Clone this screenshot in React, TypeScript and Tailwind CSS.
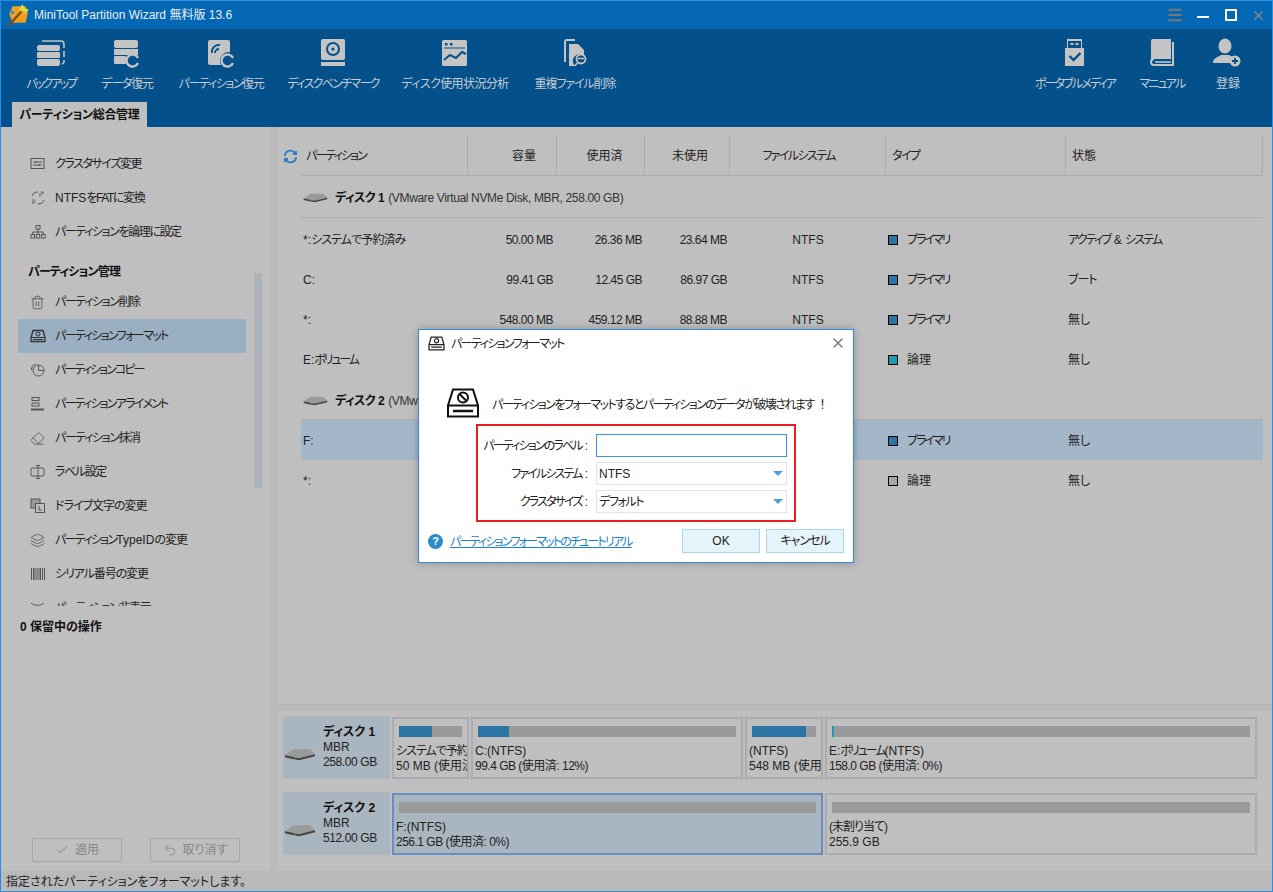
import { Check, Eraser, Layers, Menu, Trash2, Undo2, X } from "lucide-react";
import type { ReactNode } from "react";

/* toolbar icons */
const IconBackup = () => (
  <svg width="30" height="30" viewBox="0 0 30 30">
    <rect x="1" y="7" width="23" height="6" rx="2" fill="#c4c4c4" />
    <rect x="1" y="14" width="23" height="6" rx="1" fill="#c4c4c4" />
    <rect x="1" y="21" width="23" height="7" rx="2" fill="#c4c4c4" />
    <path d="M6 3h19a3 3 0 0 1 3 3v4M28 13v6M28 22v2a3 3 0 0 1-2 2" stroke="#c4c4c4" strokeWidth="1.6" fill="none" />
  </svg>
);
const IconData = () => (
  <svg width="30" height="30" viewBox="0 0 30 30">
    <rect x="2" y="2" width="24" height="8" rx="2" fill="#c4c4c4" />
    <rect x="2" y="11" width="24" height="6" fill="#c4c4c4" />
    <rect x="2" y="18" width="12" height="8" rx="1" fill="#c4c4c4" />
    <path d="M26 20a6 6 0 1 0 0 5" stroke="#c4c4c4" strokeWidth="2.4" fill="none" />
  </svg>
);
const IconPart = () => (
  <svg width="30" height="30" viewBox="0 0 30 30">
    <path d="M4 2h18a2 2 0 0 1 2 2v10a9 9 0 0 0-9 13H4a2 2 0 0 1-2-2V4a2 2 0 0 1 2-2z" fill="#c4c4c4" />
    <path d="M6 15a7 7 0 0 1 8-8M9 15a4 4 0 0 1 4-4" stroke="#03508a" strokeWidth="1.8" fill="none" />
    <path d="M27 20a6 6 0 1 0 0 5" stroke="#c4c4c4" strokeWidth="2.4" fill="none" />
  </svg>
);
const IconBench = () => (
  <svg width="30" height="30" viewBox="0 0 30 30">
    <rect x="3" y="1" width="24" height="21" rx="2" fill="#c4c4c4" />
    <circle cx="15" cy="11" r="7" fill="#03508a" />
    <circle cx="15" cy="11" r="5" fill="#c4c4c4" />
    <circle cx="15" cy="11" r="1.6" fill="#03508a" />
    <rect x="3" y="24" width="24" height="4" fill="#c4c4c4" />
  </svg>
);
const IconUsage = () => (
  <svg width="30" height="30" viewBox="0 0 30 30">
    <rect x="2" y="2" width="25" height="26" rx="1.5" fill="#c4c4c4" />
    <rect x="5" y="5" width="2.5" height="2.5" fill="#03508a" />
    <rect x="10" y="5" width="2.5" height="2.5" fill="#03508a" />
    <path d="M4 10h21" stroke="#03508a" strokeWidth="1" />
    <path d="M4 22l6-5 6 3 6-6 4 2" stroke="#03508a" strokeWidth="2" fill="none" />
  </svg>
);
const IconDup = () => (
  <svg width="30" height="30" viewBox="0 0 30 30">
    <path d="M5 24V4a2 2 0 0 1 2-2h8" stroke="#c4c4c4" strokeWidth="2" fill="none" />
    <path d="M9 6h9l6 6v6a6 6 0 0 0-9 10H9z" fill="#c4c4c4" />
    <circle cx="21" cy="21" r="4.5" stroke="#c4c4c4" strokeWidth="1.8" fill="none" />
    <path d="M18 20.5h6M17.5 25l-3 3" stroke="#c4c4c4" strokeWidth="1.6" />
  </svg>
);
const IconUsb = () => (
  <svg width="30" height="30" viewBox="0 0 30 30">
    <path d="M7 1h15v9h2v18H5V10h2z" fill="#c4c4c4" />
    <rect x="8" y="3" width="13" height="7" fill="#03508a" />
    <rect x="10.5" y="5" width="3" height="2" fill="#c4c4c4" />
    <rect x="15.5" y="5" width="3" height="2" fill="#c4c4c4" />
    <path d="M9.5 18l4 4 7-7" stroke="#03508a" strokeWidth="2.4" fill="none" />
  </svg>
);
const IconBook = () => (
  <svg width="30" height="30" viewBox="0 0 30 30">
    <path d="M6 1h18v20H7a3 3 0 0 0-3 2V3a2 2 0 0 1 2-2z" fill="#c4c4c4" />
    <path d="M26 4v23H7a3 3 0 0 1 0-6" stroke="#c4c4c4" strokeWidth="2" fill="none" />
    <path d="M8 24h16" stroke="#c4c4c4" strokeWidth="1.6" />
  </svg>
);
const IconUser = () => (
  <svg width="30" height="30" viewBox="0 0 30 30">
    <ellipse cx="12" cy="8" rx="6.5" ry="7.5" fill="#c4c4c4" />
    <path d="M0 25c0-5 5-6 8-8h8c2 1 3 1.500 4 2a7 7 0 0 0-3 6z" fill="#c4c4c4" />
    <circle cx="22" cy="23" r="5.500" fill="#c4c4c4" />
    <path d="M19 23h6M22 20v6" stroke="#03508a" strokeWidth="1.800" />
  </svg>
);

const tools = [
  { label: "バックアップ", icon: <IconBackup />, w: "w-[76px]", t: "tracking-[-2.3px]" },
  { label: "データ復元", icon: <IconData />, w: "w-[76px]", t: "tracking-[-1.2px]" },
  { label: "パーティション復元", icon: <IconPart />, w: "w-[112px]", t: "tracking-[-1.4px]" },
  { label: "ディスクベンチマーク", icon: <IconBench />, w: "w-[112px]", t: "tracking-[-1.7px]" },
  { label: "ディスク使用状況分析", icon: <IconUsage />, w: "w-[132px]", t: "tracking-[-0.6px]" },
  { label: "重複ファイル削除", icon: <IconDup />, w: "w-[108px]", t: "tracking-[-1.1px]" },
];

const rightTools = [
  { label: "ポータブルメディア", icon: <IconUsb />, w: "w-[96px]", t: "tracking-[-1.9px]" },
  { label: "マニュアル", icon: <IconBook />, w: "w-[78px]", t: "tracking-[-1.8px]" },
  { label: "登録", icon: <IconUser />, w: "w-[54px]", t: "" },
];

function ToolItem({ label, icon, w, t }: { label: string; icon: ReactNode; w: string; t: string }) {
  return (
    <div className={`${w} flex shrink-0 flex-col items-center`}>
      <div className="flex h-[32px] items-center">{icon}</div>
      <div className={`mt-[7px] text-[12px] leading-[16px] whitespace-nowrap text-[#c6cdd4] ${t}`}>{label}</div>
    </div>
  );
}

/* sidebar icons */
const stroke = "#555";
const SideSvg = ({ children }: { children: ReactNode }) => (
  <svg width="16" height="16" viewBox="0 0 16 16" fill="none" stroke={stroke} strokeWidth="1">
    {children}
  </svg>
);
const sideIcons: Record<string, ReactNode> = {
  cluster: (
    <SideSvg>
      <rect x="1" y="2.500" width="13" height="10" />
      <path d="M3 6h9M3 9h9M6 5v2M9 8v2" />
    </SideSvg>
  ),
  convert: (
    <SideSvg>
      <path d="M2 6a6 6 0 0 1 6-4M14 10a6 6 0 0 1-6 4M11 2h2v2M3 14v-2" />
      <text x="9" y="7" fontSize="5" fill={stroke} stroke="none">F</text>
      <text x="2" y="13" fontSize="5" fill={stroke} stroke="none">N</text>
    </SideSvg>
  ),
  network: (
    <SideSvg>
      <rect x="6" y="1.500" width="4" height="3.500" />
      <rect x="1" y="10.500" width="3.500" height="3.500" />
      <rect x="6.200" y="10.500" width="3.500" height="3.500" />
      <rect x="11.500" y="10.500" width="3.500" height="3.500" />
      <path d="M8 5v5.500M2.700 10.500V8h10.600v2.500" />
    </SideSvg>
  ),
  trash: <Trash2 size={15} color={stroke} strokeWidth={1.4} />,
  format: (
    <SideSvg>
      <path d="M3 2.500h10l2 7v4H1v-4z" strokeWidth="1.300" stroke="#333" />
      <path d="M1 9.500h14M3 11.500h10" stroke="#333" />
      <circle cx="8" cy="6" r="2" stroke="#333" />
    </SideSvg>
  ),
  copy: (
    <SideSvg>
      <circle cx="8.500" cy="8.500" r="5.500" />
      <path d="M8.500 3v5.500H14M1.500 8a6 6 0 0 1 4-6" />
    </SideSvg>
  ),
  align: (
    <SideSvg>
      <rect x="2" y="1.500" width="7" height="3" />
      <rect x="2" y="7" width="7" height="3" />
      <path d="M1 13.500h13" strokeWidth="2" />
    </SideSvg>
  ),
  eraser: <Eraser size={15} color={stroke} strokeWidth={1.3} />,
  label: (
    <SideSvg>
      <rect x="1" y="4" width="13" height="8" rx="1" />
      <path d="M6 1.500h4M8 1.500v13M6 14.500h4" />
    </SideSvg>
  ),
  letter: (
    <SideSvg>
      <rect x="1" y="1" width="9" height="9" fill="#999" />
      <rect x="5.500" y="5.500" width="9" height="9" fill="#bfbfbf" />
      <path d="M9 8v4h3" />
    </SideSvg>
  ),
  layers: <Layers size={15} color={stroke} strokeWidth={1.3} />,
  serial: (
    <SideSvg>
      <path d="M1.500 2v12M3.500 2v12M5 2v12M7 2v12M9 2v12M10.500 2v12M12.500 2v12M14.500 2v12" />
    </SideSvg>
  ),
  hide: (
    <SideSvg>
      <path d="M1 3c3 3 10 3 13 0" />
    </SideSvg>
  ),
};

const topItems = [
  { label: "クラスタサイズ変更", icon: "cluster", t: "tracking-[-1.4px]" },
  { label: <>NTFS<span className="tracking-[-1.4px]">をFATに変換</span></>, icon: "convert", t: "" },
  { label: "パーティションを論理に設定", icon: "network", t: "tracking-[-1.4px]" },
];
const manageItems = [
  { label: "パーティション削除", icon: "trash", t: "tracking-[-1.4px]" },
  { label: "パーティションフォーマット", icon: "format", active: true, t: "tracking-[-1.6px]" },
  { label: "パーティションコピー", icon: "copy", t: "tracking-[-1.9px]" },
  { label: "パーティションアライメント", icon: "align", t: "tracking-[-1.8px]" },
  { label: "パーティション抹消", icon: "eraser", t: "tracking-[-1.4px]" },
  { label: "ラベル設定", icon: "label", t: "tracking-[-1.4px]" },
  { label: "ドライブ文字の変更", icon: "letter", t: "tracking-[-1px]" },
  { label: <><span className="tracking-[-1.7px]">パーティション</span>TypeID<span className="tracking-[-1px]">の変更</span></>, icon: "layers", t: "" },
  { label: "シリアル番号の変更", icon: "serial", t: "tracking-[-1.1px]" },
  { label: "パーティション非表示", icon: "hide", t: "tracking-[-1.4px]" },
];

function SideItem({ label, icon, active, t }: { label: ReactNode; icon: string; active?: boolean; t: string }) {
  return (
    <div className={`flex h-[34px] items-center pl-[12px] text-[12px] whitespace-nowrap text-[#222] ${active ? "bg-[#9aafc2]" : ""}`}>
      <span className="flex w-[25px] shrink-0 items-center">{sideIcons[icon]}</span>
      <span className={t}>{label}</span>
    </div>
  );
}

/* disk image used by the table and the map */
const DiskImg = ({ w }: { w: number }) => (
  <svg width={w} height={w * 0.45} viewBox="0 0 32 14">
    <path d="M1 8L9 2h17l5 5-3 2-12 3H6L1 10z" fill="#9a9a9a" />
    <path d="M1 8l14 3 16-4v2L15 13 1 10z" fill="#444" />
    <circle cx="11" cy="10.500" r="0.800" fill="#3fbf5f" />
  </svg>
);

const swatch: Record<string, string> = { blue: "bg-[#2c74a3]", teal: "bg-[#1f9cb0]", gray: "bg-[#a9a9a9]" };

type Row = {
  name: ReactNode;
  cap?: string;
  used?: string;
  free?: string;
  fs?: string;
  color: string;
  type: string;
  typeT?: string;
  status: ReactNode;
  statusT?: string;
  selected?: boolean;
};

const disk1: Row[] = [
  {
    name: <>*:<span className="tracking-[-0.9px]">システムで予約済み</span></>,
    cap: "50.00 MB",
    used: "26.36 MB",
    free: "23.64 MB",
    fs: "NTFS",
    color: "blue",
    type: "プライマリ",
    typeT: "tracking-[-2px]",
    status: <><span className="tracking-[-1.8px]">アクティブ</span> &amp; <span className="tracking-[-1.8px]">システム</span></>,
  },
  { name: "C:", cap: "99.41 GB", used: "12.45 GB", free: "86.97 GB", fs: "NTFS", color: "blue", type: "プライマリ", typeT: "tracking-[-2px]", status: "ブート", statusT: "tracking-[-1px]" },
  { name: "*:", cap: "548.00 MB", used: "459.12 MB", free: "88.88 MB", fs: "NTFS", color: "blue", type: "プライマリ", typeT: "tracking-[-2px]", status: "無し" },
  { name: <>E:<span className="tracking-[-2.2px]">ボリューム</span></>, fs: "NTFS", color: "teal", type: "論理", status: "無し" },
];
const disk2: Row[] = [
  { name: "F:", fs: "NTFS", color: "blue", type: "プライマリ", typeT: "tracking-[-2px]", status: "無し", selected: true },
  { name: "*:", fs: "NTFS", color: "gray", type: "論理", status: "無し" },
];

function TableRow({ r }: { r: Row }) {
  return (
    <div className={`grid h-[40px] grid-cols-[167px_89px_88px_85px_156px_180px_197px] items-center pt-[2px] text-[12px] text-[#222] ${r.selected ? "bg-[#a4b7c9]" : ""}`}>
      <div className="pl-[2px]">{r.name}</div>
      <div className="pr-[4px] text-right tracking-[-0.5px]">{r.cap}</div>
      <div className="pr-[3px] text-right tracking-[-0.5px]">{r.used}</div>
      <div className="pr-[3px] text-right tracking-[-0.5px]">{r.free}</div>
      <div className="text-center">{r.fs}</div>
      <div className="flex items-center pl-[2px]">
        <span className={`mr-[9px] size-[10px] border border-black ${swatch[r.color]}`} />
        <span className={r.typeT}>{r.type}</span>
      </div>
      <div className={`pl-[2px] ${r.statusT ?? ""}`}>{r.status}</div>
    </div>
  );
}

function DiskHead({ n, rest, h }: { n: string; rest: string; h: string }) {
  return (
    <div className={`${h} flex items-center border-b border-[#adadad] pt-[3px] pl-[2px] text-[12px] text-[#333]`}>
      <DiskImg w={25} />
      <b className="ml-[7px] font-bold tracking-[-0.5px] text-[#111]">ディスク {n}</b>
      <span className="ml-[4px] tracking-[-0.35px] whitespace-nowrap">{rest}</span>
    </div>
  );
}

type Part = { w: string; line1: ReactNode; line2: string; t1?: string; t2?: string; used?: string; bar?: string; selected?: boolean };

function PartBox({ p }: { p: Part }) {
  return (
    <div className={`${p.w} h-[62px] shrink-0 overflow-hidden border-2 px-[5px] pt-[7px] ${p.selected ? "border-[#6a8ac8] bg-[#a9b5bf]" : "border-[#a9adb0]"}`}>
      <div className="h-[11px] bg-[#9a9a9a]">
        {p.used && <div className={`h-full ${p.used} ${p.bar ?? "bg-[#2c74a3]"}`} />}
      </div>
      <div className="mt-[7px] -ml-[3px] text-[12px] leading-[15px] whitespace-nowrap text-[#222]">
        <div className={p.t1}>{p.line1}</div>
        <div className={p.t2}>{p.line2}</div>
      </div>
    </div>
  );
}

function DiskInfo({ n, size }: { n: string; size: string }) {
  return (
    <div className="flex h-[63px] w-[107px] shrink-0 items-center rounded-l-[3px] bg-[#a9b5bf]">
      <div className="mt-[14px] ml-[1px]">
        <DiskImg w={32} />
      </div>
      <div className="ml-[7px] text-[12px] leading-[15px] text-[#222]">
        <div className="font-bold text-[#111]">ディスク {n}</div>
        <div>MBR</div>
        <div className="tracking-[-0.4px]">{size}</div>
      </div>
    </div>
  );
}

function FormRow({ label, children }: { label: string; children: ReactNode }) {
  return (
    <div className="mb-[5px] flex h-[23px] items-center">
      <div className="w-[110px] text-right whitespace-nowrap">
        <span className="tracking-[-1.85px]">{label}</span>
        <span className="ml-[3px]">:</span>
      </div>
      <div className="ml-[8px]">{children}</div>
    </div>
  );
}

function SelectBox({ value }: { value: string }) {
  return (
    <div className="flex h-[23px] w-[191px] items-center justify-between border border-[#e3e3e3] pr-[3px] pl-[2px]">
      <span className={value === "NTFS" ? "" : "tracking-[-1.4px]"}>{value}</span>
      <span className="h-0 w-0 border-x-[5px] border-t-[5px] border-x-transparent border-t-[#4a9fdc]" />
    </div>
  );
}

function Dialog() {
  return (
    <div className="absolute top-[329px] left-[417px] flex h-[234px] w-[436px] flex-col border border-[#2a8fe0] bg-white text-[12px] text-[#222] shadow-[0_0_8px_rgba(0,0,0,0.25)]">
      <div className="flex h-[26px] items-center pr-[7px] pl-[9px]">
        <svg width="17" height="15" viewBox="0 0 16 14" fill="none" stroke="#222" strokeWidth="1.200">
          <path d="M3 1h10l2 7v5H1V8z" />
          <path d="M1 8h14M3 10.500h10" />
          <circle cx="8" cy="4.500" r="2" />
        </svg>
        <span className="ml-[6px] flex-1 pt-[2px] tracking-[-1.6px]">パーティションフォーマット</span>
        <X size={16} color="#777" strokeWidth={2} />
      </div>
      <div className="mt-[32px] flex items-center pl-[28px]">
        <svg width="32" height="30" viewBox="0 0 32 30" fill="none" stroke="#111" strokeWidth="2">
          <path d="M6 1.500h20l5 16v11H1v-11z" />
          <path d="M1 17.500h30" />
          <path d="M6 23h20" strokeWidth="2.500" />
          <circle cx="16" cy="9.500" r="5" />
          <path d="M12.500 6l7 7" />
        </svg>
        <span className="ml-[13px] pt-[3px] whitespace-nowrap">
          <span className="tracking-[-1.55px]">パーティションをフォーマットするとパーティションのデータが破壊されます</span>
          <span className="ml-[6px]">！</span>
        </span>
      </div>
      <div className="mt-[6px] ml-[57px] h-[98px] w-[320px] border-2 border-[#ed1c24] pt-[8px]">
        <FormRow label="パーティションのラベル">
          <div className="h-[23px] w-[191px] border border-[#3a96dd]" />
        </FormRow>
        <FormRow label="ファイルシステム">
          <SelectBox value="NTFS" />
        </FormRow>
        <FormRow label="クラスタサイズ">
          <SelectBox value="デフォルト" />
        </FormRow>
      </div>
      <div className="mt-[7px] flex items-center pr-[9px] pl-[9px]">
        <span className="flex size-[15px] items-center justify-center rounded-full bg-[#2d8acb] text-[11px] font-bold text-white">?</span>
        <span className="ml-[7px] flex-1 pt-[1px] tracking-[-1.8px] text-[#1a82d0] underline">パーティションフォーマットのチュートリアル</span>
        <button className="h-[24px] w-[78px] border border-[#a5d8f3] bg-[#e5f3fb]">OK</button>
        <button className="ml-[6px] h-[24px] w-[78px] border border-[#a5d8f3] bg-[#e5f3fb] tracking-[-1px]">キャンセル</button>
      </div>
    </div>
  );
}

const headCols = [
  { label: "パーティション", cls: "pl-[5px] tracking-[-1.9px]" },
  { label: "容量", cls: "justify-center pl-[24px]" },
  { label: "使用済", cls: "justify-center pl-[8px]" },
  { label: "未使用", cls: "justify-center pl-[6px]" },
  { label: "ファイルシステム", cls: "justify-center pr-[18px] tracking-[-1.6px]" },
  { label: "タイプ", cls: "pl-[6px] tracking-[-1.6px]" },
  { label: "状態", cls: "pl-[6px]" },
];

export default function App() {
  return (
    <div className="relative flex h-[892px] w-[1273px] flex-col overflow-hidden border-x border-b border-[#2a8fe0] bg-[#bfbfbf] font-['Liberation_Sans','Noto_Sans_CJK_JP',sans-serif] [font-feature-settings:'palt']">
      {/* title bar */}
      <div className="flex h-[29px] shrink-0 items-center border-t border-[#2a8fe0] bg-[#0367b4] pr-[6px] pl-[5px] text-[12px] text-[#e8eef4]">
        <svg width="24" height="24" viewBox="0 0 22 22">
          <path d="M6 3h12l2 6-2 9H6L3 10z" fill="#f0a020" />
          <path d="M2 21L14 8" stroke="#7a4a10" strokeWidth="2" />
          <path d="M15 1l2 4 4 1-3 3-3-2-3-1z" fill="#d8e040" />
          <path d="M5 6l3 3-3 2z" fill="#3a80d0" />
        </svg>
        <span className="ml-[4px] flex-1">MiniTool Partition Wizard 無料版 13.6</span>
        <Menu size={18} color="#777" strokeWidth={2.500} />
        <span className="mt-[3px] ml-[13px] h-[2px] w-[12px] bg-white" />
        <span className="ml-[16px] size-[12px] border-2 border-white" />
        <span className="ml-[14px]">
          <X size={15} color="#7a8690" strokeWidth={2.500} />
        </span>
      </div>

      {/* toolbar */}
      <div className="relative h-[98px] shrink-0 bg-[#03508a]">
        <div className="flex pt-[8px] pl-[12px]">
          {tools.map((t) => (
            <ToolItem key={t.label} {...t} />
          ))}
          <div className="flex-1" />
          {rightTools.map((t) => (
            <ToolItem key={t.label} {...t} />
          ))}
          <div className="w-[17px]" />
        </div>
        <div className="absolute bottom-0 left-[11px] flex h-[25px] w-[135px] items-center justify-center bg-[#bfbfbf] text-[12px] font-bold tracking-[-0.3px] text-[#111]">
          パーティション総合管理
        </div>
      </div>

      {/* body */}
      <div className="flex min-h-0 flex-1">
        {/* sidebar */}
        <div className="flex w-[269px] shrink-0 flex-col">
          <div className="flex h-[479px] overflow-hidden">
            <div className="ml-[17px] w-[228px] pt-[20px]">
              {topItems.map((i) => (
                <SideItem key={i.icon} {...i} />
              ))}
              <div className="mt-[14px] mb-[4px] flex h-[18px] items-center pl-[10px] text-[12px] font-bold tracking-[-0.8px] text-[#111]">パーティション管理</div>
              {manageItems.map((i) => (
                <SideItem key={i.icon} {...i} />
              ))}
            </div>
            <div className="ml-[8px] w-[8px] pt-[146px]">
              <div className="h-[215px] bg-[#adb4b9]" />
            </div>
          </div>
          <div className="mt-[12px] pl-[19px] text-[12px] font-bold text-[#111]">0 保留中の操作</div>
          <div className="flex-1" />
          <div className="mb-[9px] flex gap-[28px] pl-[31px] text-[12px] text-[#888]">
            <div className="flex h-[24px] w-[90px] items-center justify-center gap-[6px] border border-[#a8a8a8]">
              <Check size={14} color="#999" />
              適用
            </div>
            <div className="flex h-[24px] w-[90px] items-center justify-center gap-[6px] border border-[#a8a8a8]">
              <Undo2 size={14} color="#999" />
              取り消す
            </div>
          </div>
        </div>
        <div className="w-[7px] shrink-0 bg-[#bababa]" />

        {/* main */}
        <div className="flex min-w-0 flex-1 flex-col">
          <div className="flex-1 pt-[8px] pr-[9px] pl-[24px]">
            <div className="relative grid h-[41px] grid-cols-[167px_89px_88px_85px_156px_180px_197px] border-b border-[#adadad] text-[12px] text-[#222]">
              <span className="absolute top-[14px] -left-[18px]">
                <svg width="15" height="15" viewBox="0 0 24 24" fill="none" stroke="#2a7cc8" strokeWidth="3">
                  <path d="M3 11a9 9 0 0 1 16-5l2 2M21 13a9 9 0 0 1-16 5l-2-2M21 3v5h-5M3 21v-5h5" />
                </svg>
              </span>
              {headCols.map((c) => (
                <div key={c.label} className={`flex items-center border-r border-[#adadad] pt-[2px] ${c.cls}`}>
                  {c.label}
                </div>
              ))}
            </div>
            <div className="mb-[1px]">
              <DiskHead n="1" rest="(VMware Virtual NVMe Disk, MBR, 258.00 GB)" h="h-[42px]" />
            </div>
            {disk1.map((r, i) => (
              <TableRow key={i} r={r} />
            ))}
            <DiskHead n="2" rest="(VMware Virtual NVMe Disk, MBR, 512.00 GB)" h="h-[41px]" />
            {disk2.map((r, i) => (
              <TableRow key={i} r={r} />
            ))}
          </div>

          {/* disk map */}
          <div className="h-[7px] shrink-0 bg-[#b9b9b9]" />
          <div className="flex h-[160px] shrink-0 flex-col gap-[13px] pt-[5px] pl-[6px]">
            <div className="flex items-center gap-[2px]">
              <DiskInfo n="1" size="258.00 GB" />
              <PartBox p={{ w: "w-[77px]", line1: "システムで予約済み", t1: "tracking-[-1px]", line2: "50 MB (使用済: 52%)", used: "w-[53%]" }} />
              <PartBox p={{ w: "w-[272px]", line1: "C:(NTFS)", line2: "99.4 GB (使用済: 12%)", t2: "tracking-[-0.5px]", used: "w-[12%]" }} />
              <PartBox p={{ w: "w-[78px]", line1: "(NTFS)", line2: "548 MB (使用済: 83%)", used: "w-[84%]" }} />
              <PartBox p={{ w: "w-[432px]", line1: <>E:<span className="tracking-[-2px]">ボリューム</span>(NTFS)</>, line2: "158.0 GB (使用済: 0%)", t2: "tracking-[-0.5px]", used: "w-[2px]", bar: "bg-[#1f9cb0]" }} />
            </div>
            <div className="flex items-center gap-[2px]">
              <DiskInfo n="2" size="512.00 GB" />
              <PartBox p={{ w: "w-[431px]", line1: "F:(NTFS)", line2: "256.1 GB (使用済: 0%)", t2: "tracking-[-0.5px]", selected: true }} />
              <PartBox p={{ w: "w-[432px]", line1: "(未割り当て)", t1: "tracking-[-1px]", line2: "255.9 GB" }} />
            </div>
          </div>
        </div>
      </div>

      {/* status bar */}
      <div className="flex h-[20px] shrink-0 items-center bg-[#b9b9b9] pt-[2px] pl-[5px] text-[12px] text-[#222]">指定されたパーティションをフォーマットします。</div>

      <Dialog />
    </div>
  );
}
